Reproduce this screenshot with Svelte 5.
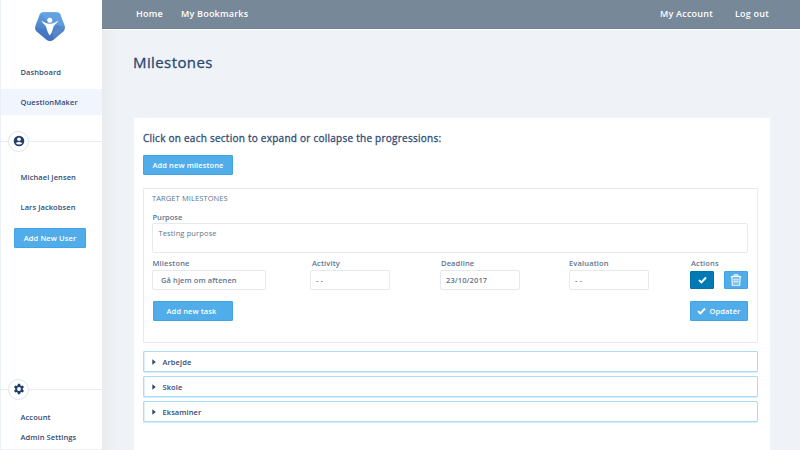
<script>
  const sections = ['Arbejde', 'Skole', 'Eksaminer'];
</script>

{#snippet check()}
  <svg class="check" viewBox="0 0 9 8"><path d="M1 4.1 3.4 6.4 8 1.5" fill="none" stroke="#fff" stroke-width="2" /></svg>
{/snippet}

<div class="app">
  <aside>
    <svg class="logo" viewBox="0 0 30 30">
      <defs>
        <linearGradient id="blue" x1="0" y1="0" x2="0" y2="1">
          <stop offset="0" stop-color="#5f9edf" /><stop offset="1" stop-color="#3f6fba" />
        </linearGradient>
        <clipPath id="gem"><path d="M8 .2H22Q24.300.2 25.200 2.300L29.500 13.500Q30.700 17 28.300 19.500L18.500 27.800Q15 30.400 11.500 27.800L1.700 19.500Q-.7 17 .5 13.500L4.800 2.300Q5.700.2 8 .2Z" /></clipPath>
      </defs>
      <g clip-path="url(#gem)">
        <path d="M0 0h30v30H0Z" fill="url(#blue)" />
        <path d="M5 0 14 11 30 15V0Z" fill="#6ba7e4" opacity=".6" />
        <path d="M0 15 14 18 25 30H0Z" fill="#4374bf" opacity=".5" />
        <path d="M17 20 30 14 20 30Z" fill="#6290cf" opacity=".5" />
      </g>
      <circle cx="14.800" cy="8.300" r="2.500" fill="#fff" />
      <path d="M6.400 8.600C9 10.500 11.200 11.700 14.800 11.700s5.800-1.200 8.400-3.100C21.800 12 18.900 13 18.300 15.300 17.600 18 17 20.800 14.800 23.600 12.600 20.800 12 18 11.300 15.300 10.700 13 7.800 12 6.400 8.600Z" fill="#fff" />
    </svg>
    <a class="dash"><span>Dashboard</span></a>
    <a class="active"><span>QuestionMaker</span></a>
    <div class="rule users">
      <i><svg viewBox="0 0 12 12"><circle cx="6" cy="6" r="5.300" fill="#243f6b" /><circle cx="6" cy="4.300" r="1.800" fill="#fff" /><path d="M2.700 7.900Q6 5.900 9.300 7.900 8.300 9.600 6 9.600T2.700 7.900Z" fill="#fff" /></svg></i>
    </div>
    <a class="person"><span>Michael Jensen</span></a>
    <a class="person"><span>Lars Jackobsen</span></a>
    <button class="add-user"><span>Add New User</span></button>
    <div class="rule settings">
      <i><svg viewBox="0 0 12 12"><path fill="#243f6b" fill-rule="evenodd" d="M4.900.8h2.200l.3 1.500 1 .6 1.500-.5L11 4.300l-1.200 1v1.400l1.200 1-1.100 1.900-1.500-.5-1 .6-.3 1.500H4.900l-.3-1.500-1-.6-1.500.5L1 7.700l1.200-1V5.300L1 4.300l1.100-1.900 1.500.5 1-.6ZM6 4.100a1.900 1.900 0 1 0 0 3.800 1.900 1.900 0 0 0 0-3.800Z" /></svg></i>
    </div>
    <a class="setting"><span>Account</span></a>
    <a class="setting"><span>Admin Settings</span></a>
  </aside>

  <main>
    <header>
      <nav><a>Home</a><a>My Bookmarks</a></nav>
      <nav class="right"><a>My Account</a><a>Log out</a></nav>
    </header>
    <div class="body">
      <h1><span>Milestones</span></h1>
      <section class="card">
        <h2><span>Click on each section to expand or collapse the progressions:</span></h2>
        <button class="new-milestone"><span>Add new milestone</span></button>
        <div class="target">
          <h3><span>TARGET MILESTONES</span></h3>
          <label class="purpose">Purpose</label>
          <div class="area"><span>Testing purpose</span></div>
          <div class="fields">
            <div class="field f1"><label>Milestone</label><div class="box"><span>Gå hjem om aftenen</span></div></div>
            <div class="field f2"><label>Activity</label><div class="box"><span>- -</span></div></div>
            <div class="field f3"><label>Deadline</label><div class="box"><span>23/10/2017</span></div></div>
            <div class="field f4"><label>Evaluation</label><div class="box"><span>- -</span></div></div>
            <div class="field f5">
              <label>Actions</label>
              <div class="actions">
                <button class="confirm">{@render check()}</button>
                <button class="delete"><svg viewBox="0 0 12 12"><path d="M.8 2.600H11.200M3.700 2.400 4.300.9H7.700L8.300 2.400M1.900 3 2.300 11.200H9.700L10.100 3" fill="none" stroke="#fff" stroke-width="1.100" /><path d="M4.200 4.300V9.700M6 4.300V9.700M7.800 4.300V9.700" stroke="#fff" stroke-width=".8" /><path d="M3 5.500h6M3 7.500h6" stroke="#fff" stroke-width=".4" /></svg></button>
              </div>
            </div>
          </div>
          <div class="foot">
            <button class="task"><span>Add new task</span></button>
            <button class="update">{@render check()}<span>Opdatér</span></button>
          </div>
        </div>
        <div class="list">
          {#each sections as name}
            <div class="item"><svg viewBox="0 0 4 6"><path d="M.3.2 3.800 3 .3 5.800Z" fill="#2c4872" /></svg><span>{name}</span></div>
          {/each}
        </div>
      </section>
    </div>
  </main>
</div>

<style>
  :global(body) { margin: 0; overflow: hidden; }
  * { box-sizing: border-box; }
  .app { width: 800px; height: 450px; overflow: hidden; display: flex; font: 600 7.500px/10px "Open Sans", "Noto Sans", sans-serif; color: #304b76; background: #eff3f7; }
  span, label, a { white-space: nowrap; }
  h1, h2, h3 { margin: 0; }
  button { display: flex; align-items: center; justify-content: center; padding: 0; font: inherit; letter-spacing: .1px; color: #fff; background: #50adea; border: 1px solid #3fa4e8; border-radius: 1px; }
  aside { width: 102px; flex: none; background: #fff; border-left: 1px solid #eaf0f6; display: flex; flex-direction: column; border-bottom: 1px solid #eef2f6; }
  aside a { display: flex; align-items: center; padding-left: 19.500px; flex: none; letter-spacing: .08px; }
  .logo { width: 30px; height: 30px; margin: 12px 0 0 34px; flex: none; }
  .dash { height: 26px; margin-top: 17px; }
  .active { height: 26px; margin-top: 4px; background: #f0f5fe; }
  .rule { height: 22px; flex: none; display: flex; align-items: center; padding-left: 7px; background: linear-gradient(#e8edf4, #e8edf4) 0 11px / 100% 1px no-repeat; }
  .rule i { width: 21px; height: 21px; border: 1px solid #dbe4ee; border-radius: 50%; background: #fff; display: flex; align-items: center; justify-content: center; }
  .rule svg { width: 12px; height: 12px; }
  .users { margin: 15px 0 10px; }
  .person { height: 30px; }
  .add-user { width: 72px; height: 20px; margin: 6px 0 0 13px; flex: none; }
  .settings { margin: 130px 0 7px; }
  .setting { height: 20px; }
  main { flex: 1; min-width: 0; display: flex; flex-direction: column; }
  header { height: 30px; flex: none; background: #778899; border-bottom: 1px solid #fff; box-shadow: inset 0 -1px #6c8197; display: flex; justify-content: space-between; padding: 0 31px 1px 34px; color: #fff; font-size: 9px; }
  nav { display: flex; align-items: center; gap: 18px; letter-spacing: .22px; }
  .right { gap: 22px; }
  .body { flex: 1; padding: 21px 30px 0 32px; background: linear-gradient(90deg, #e8ecef, #eff3f7 15px); }
  h1 { font-size: 15px; line-height: 23px; font-weight: 400; letter-spacing: .4px; margin: 0 0 44px -1px; color: #2c4872; -webkit-text-stroke: .3px #2c4872; }
  .card { height: 332px; background: #fff; padding: 12px 12px 0 9px; }
  h2 { font-size: 10px; line-height: 16px; font-weight: 400; letter-spacing: .25px; -webkit-text-stroke: .3px #304b76; }
  .new-milestone { width: 90px; height: 20px; margin-top: 9px; }
  .target { width: 615px; height: 155px; margin-top: 13px; border: 1px solid #e4eaf0; border-radius: 1px; padding: 4px 9px 0 8px; color: #61758d; }
  h3 { font-size: 7.500px; line-height: 10px; font-weight: 400; letter-spacing: .1px; }
  .purpose { display: block; margin: 9px 0 1px .5px; }
  .area { height: 30px; border: 1px solid #e4eaf0; border-radius: 2px; padding: 4px 5.500px; font-weight: 400; letter-spacing: .13px; }
  .fields { display: flex; margin-top: 5px; }
  .field { flex: none; }
  .field label { display: block; margin-bottom: 2px; padding-left: .5px; letter-spacing: .15px; }
  .f1 { width: 158px; }
  .f2 { width: 130px; }
  .f3 { width: 129px; }
  .f4 { width: 121px; }
  .f2 label { padding-left: 2px; }
  .f3 label { padding-left: 1px; }
  .f4 label { padding-left: 0; }
  .f5 label { padding-left: 1px; }
  .box { width: 80px; height: 20px; border: 1px solid #e4eaf0; border-radius: 2px; display: flex; align-items: center; padding-left: 5px; letter-spacing: .1px; }
  .f1 .box { width: 114px; padding-left: 8px; }
  .actions { display: flex; gap: 10px; padding-top: 1px; }
  .actions button { width: 24px; height: 18px; }
  .actions .confirm { background: #007ab5; border-color: #0072aa; }
  .check { width: 9px; height: 8px; }
  .delete svg { width: 12px; height: 12px; }
  .foot { display: flex; justify-content: space-between; margin: 11px 0 0 1px; }
  .task { width: 80px; height: 20px; padding-right: 3px; }
  .update { width: 58px; height: 20px; gap: 4px; padding-right: 1px; }
  .list { display: flex; flex-direction: column; gap: 4px; margin-top: 8px; }
  .item { width: 615px; height: 21px; border: 1px solid #acdaf7; box-shadow: inset 1px 0 #dff1fc, 0 1px #d8eefb; border-radius: 1px; display: flex; align-items: center; padding-left: 8px; letter-spacing: .08px; }
  .item svg { width: 4px; height: 6px; margin-right: 6.500px; }
</style>
